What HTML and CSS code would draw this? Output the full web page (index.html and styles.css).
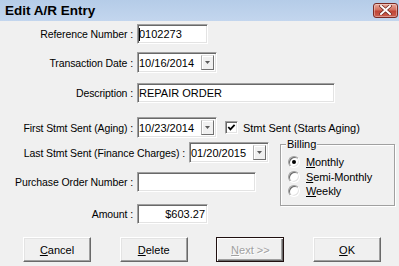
FILE: index.html
```html
<!DOCTYPE html>
<html>
<head>
<meta charset="utf-8">
<link rel="stylesheet" href="styles.css">
</head>
<body>
<div class="titlebar">
  <span class="title">Edit A/R Entry</span>
  <span class="close">
    <svg width="13" height="10" viewBox="0 0 13 10">
      <path d="M2 1 L11 9 M11 1 L2 9" stroke="#6b2620" stroke-width="3.4" stroke-linecap="square"/>
      <path d="M2 1 L11 9 M11 1 L2 9" stroke="#ffffff" stroke-width="2" stroke-linecap="square"/>
    </svg>
  </span>
</div>
<div class="content">
  <div class="row r1">
    <span class="lbl">Reference Number :</span>
    <div class="field w71"><span class="caret"></span>0102273</div>
  </div>
  <div class="row r2 tall">
    <span class="lbl">Transaction Date :</span>
    <div class="field combo w80"><span class="val">10/16/2014</span><span class="drop"><svg width="5" height="3" viewBox="0 0 5 3"><polygon points="0,0 5,0 2.5,3" fill="#5a5a5a"/></svg></span></div>
  </div>
  <div class="row r3">
    <span class="lbl">Description :</span>
    <div class="field w198">REPAIR ORDER</div>
  </div>
  <div class="row r4 tall">
    <span class="lbl">First Stmt Sent (Aging) :</span>
    <div class="field combo w80"><span class="val">10/23/2014</span><span class="drop"><svg width="5" height="3" viewBox="0 0 5 3"><polygon points="0,0 5,0 2.5,3" fill="#5a5a5a"/></svg></span></div>
    <span class="check"><svg width="11" height="11" viewBox="0 0 11 11"><polyline points="2.3,5 4.4,7.3 8.6,2.8" fill="none" stroke="#000" stroke-width="1.8"/></svg></span>
    <span class="checklbl">Stmt Sent (Starts Aging)</span>
  </div>
  <div class="lower">
    <div class="lower-left">
      <div class="row tall">
        <span class="lbl wide">Last Stmt Sent (Finance Charges) :</span>
        <div class="field combo w80"><span class="val">01/20/2015</span><span class="drop"><svg width="5" height="3" viewBox="0 0 5 3"><polygon points="0,0 5,0 2.5,3" fill="#5a5a5a"/></svg></span></div>
      </div>
      <div class="row r6">
        <span class="lbl">Purchase Order Number :</span>
        <div class="field w119"></div>
      </div>
      <div class="row r7">
        <span class="lbl">Amount :</span>
        <div class="field w71 right">$603.27</div>
      </div>
    </div>
    <fieldset class="billing">
      <legend>Billing</legend>
      <div class="radio-row"><span class="radio on"></span><span><u>M</u>onthly</span></div>
      <div class="radio-row"><span class="radio"></span><span><u>S</u>emi-Monthly</span></div>
      <div class="radio-row"><span class="radio"></span><span><u>W</u>eekly</span></div>
    </fieldset>
  </div>
  <div class="buttons">
    <div class="btn"><span><u>C</u>ancel</span></div>
    <div class="btn"><span><u>D</u>elete</span></div>
    <div class="btn default disabled"><span><u>N</u>ext &gt;&gt;</span></div>
    <div class="btn"><span><u>O</u>K</span></div>
  </div>
</div>
</body>
</html>
```
FILE: styles.css
```css
* { box-sizing: border-box; }
html, body { margin: 0; padding: 0; }
body {
  width: 399px;
  height: 266px;
  overflow: hidden;
  background: #f0f0f0;
  font-family: "Liberation Sans", Arial, sans-serif;
  font-size: 10.5px;
  color: #000;
}
.titlebar {
  height: 21px;
  background: linear-gradient(#b5cce8, #c3d6ee);
  display: flex;
  align-items: center;
  justify-content: space-between;
  padding: 0 1px 0 5px;
}
.title {
  font-weight: bold;
  font-size: 13.5px;
  color: #000;
}
.close {
  width: 25px;
  height: 15px;
  margin-top: -1px;
  border: 1px solid #7a2a24;
  border-radius: 3px;
  background: linear-gradient(#e8a99b, #d3705f 45%, #c04536 55%, #cc5f4f);
  box-shadow: inset 0 0 0 1px rgba(255,255,255,0.35);
  display: flex;
  align-items: center;
  justify-content: center;
}
.content { display: flex; flex-direction: column; }
.row {
  display: flex;
  align-items: center;
  height: 20px;
}
.row.tall { height: 21px; }
.r1 { margin-top: 3px; }
.r2 { margin-top: 8px; }
.r3 { margin-top: 10px; }
.r4 { margin-top: 14px; }
.r6 { margin-top: 9px; }
.r7 { margin-top: 12px; }
.lbl {
  width: 133px;
  margin-right: 4px;
  text-align: right;
  white-space: nowrap;
  letter-spacing: -0.1px;
}
.lbl.wide { width: 185px; }
.field {
  height: 100%;
  background: #fff;
  border: 1px solid;
  border-color: #a0a0a0 #fff #fff #a0a0a0;
  box-shadow: inset 1px 1px 0 #696969, inset -1px -1px 0 #e3e3e3;
  padding: 0 2px 0 1px;
  display: flex;
  align-items: center;
  white-space: nowrap;
  font-size: 11px;
}
.field.right { justify-content: flex-end; padding-right: 2px; }
.w71 { width: 71px; }
.w80 { width: 80px; }
.w119 { width: 119px; }
.w198 { width: 198px; }
.caret {
  display: inline-block;
  width: 1px;
  height: 13px;
  background: #000;
  margin-right: -1px;
}
.combo { justify-content: space-between; padding: 2px; padding-left: 1px; align-items: stretch; }
.val { display: flex; align-items: center; }
.drop {
  width: 13px;
  background: #f0f0f0;
  border: 1px solid;
  border-color: #e3e3e3 #707070 #707070 #b0b0b0;
  box-shadow: inset 1px 1px 0 #fff;
  display: flex;
  align-items: center;
  justify-content: center;
}
.check {
  width: 13px;
  height: 13px;
  margin-left: 8px;
  background: #fff;
  border: 1px solid;
  border-color: #a0a0a0 #fff #fff #a0a0a0;
  box-shadow: inset 1px 1px 0 #696969, inset -1px -1px 0 #e3e3e3;
  display: flex;
}
.checklbl { margin-left: 5px; font-size: 11px; letter-spacing: -0.05px; }
.lower {
  display: flex;
  align-items: flex-start;
  margin-top: 4px;
}
.lower-left { width: 280px; display: flex; flex-direction: column; }
.billing {
  width: 115px;
  height: 68px;
  margin: -4px 0 0 0;
  padding: 5px 6px 0 7px;
  border: 1px solid #a0a0a0;
  box-shadow: inset 1px 1px 0 #fff, 1px 1px 0 #fff;
  min-width: 0;
}
.billing legend {
  padding: 0 1px;
  margin-left: -2px;
  line-height: 12px;
  background: #f0f0f0;
  font-size: 11px;
}
.radio-row {
  display: flex;
  align-items: center;
  height: 14.5px;
  font-size: 11px;
  letter-spacing: -0.1px;
}
.radio {
  width: 12px;
  height: 12px;
  margin-right: 6px;
  border-radius: 50%;
  background: #fff;
  border: 1px solid;
  border-color: #a0a0a0 #fff #fff #a0a0a0;
  box-shadow: inset 1px 1px 0 #696969, inset -1px -1px 0 #e3e3e3;
  display: flex;
  align-items: center;
  justify-content: center;
}
.radio.on::after {
  content: "";
  width: 4px;
  height: 4px;
  border-radius: 50%;
  background: #000;
}
.buttons {
  display: flex;
  gap: 28.7px;
  padding-left: 23px;
  margin-top: 13px;
}
.btn {
  width: 68px;
  height: 25px;
  background: #f0f0f0;
  border: 1px solid;
  border-color: #fff #696969 #696969 #fff;
  box-shadow: inset -1px -1px 0 #a0a0a0, inset 1px 1px 0 #e3e3e3;
  display: flex;
  align-items: center;
  justify-content: center;
  font-size: 11px;
}
.btn.default {
  border: 1px solid #201010;
  box-shadow: inset 1px 1px 0 #fff, inset -1px -1px 0 #696969, inset -2px -2px 0 #a0a0a0;
}
.btn.disabled { color: #a0a0a0; text-shadow: 1px 1px 0 #fff; }
```
